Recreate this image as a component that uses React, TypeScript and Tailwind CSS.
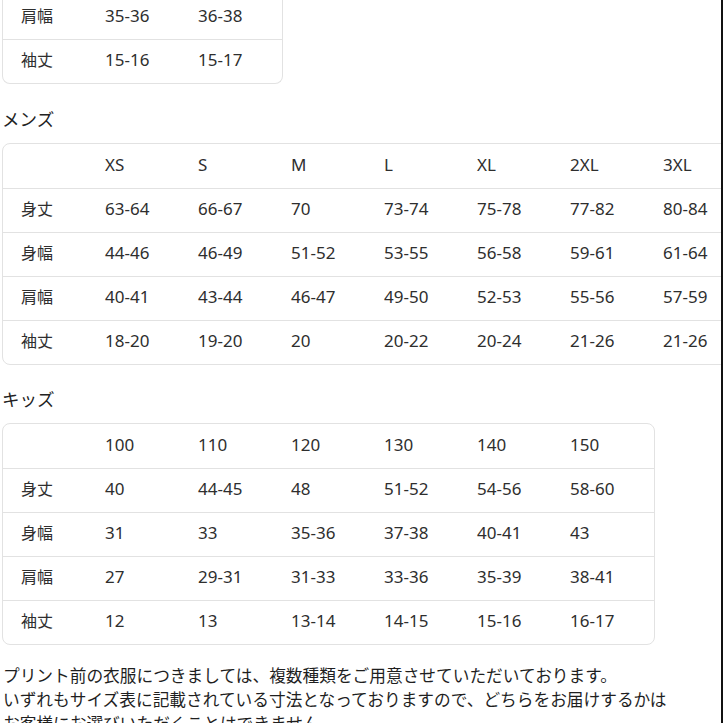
const labelW = 'w-[102px]';

type Row = { label: string; values: string[] };

const ladies: Row[] = [
  { label: '肩幅', values: ['35-36', '36-38'] },
  { label: '袖丈', values: ['15-16', '15-17'] },
];

const mensHead = ['XS', 'S', 'M', 'L', 'XL', '2XL', '3XL'];
const mens: Row[] = [
  { label: '身丈', values: ['63-64', '66-67', '70', '73-74', '75-78', '77-82', '80-84'] },
  { label: '身幅', values: ['44-46', '46-49', '51-52', '53-55', '56-58', '59-61', '61-64'] },
  { label: '肩幅', values: ['40-41', '43-44', '46-47', '49-50', '52-53', '55-56', '57-59'] },
  { label: '袖丈', values: ['18-20', '19-20', '20', '20-22', '20-24', '21-26', '21-26'] },
];

const kidsHead = ['100', '110', '120', '130', '140', '150'];
const kids: Row[] = [
  { label: '身丈', values: ['40', '44-45', '48', '51-52', '54-56', '58-60'] },
  { label: '身幅', values: ['31', '33', '35-36', '37-38', '40-41', '43'] },
  { label: '肩幅', values: ['27', '29-31', '31-33', '33-36', '35-39', '38-41'] },
  { label: '袖丈', values: ['12', '13', '13-14', '14-15', '15-16', '16-17'] },
];

function TableRow({ label, values, first }: { label: string; values: string[]; first?: boolean }) {
  return (
    <div className={`flex h-[44px] items-center pb-[3px] ${first ? '' : 'border-t-[1.5px] border-[#e2e2e2]'}`}>
      <div className={`${labelW} shrink-0 pl-[18px] text-[16px]`}>{label}</div>
      {values.map((v, i) => (
        <div key={i} className={`shrink-0 text-[17px] ${i === values.length - 1 ? 'w-[84px]' : 'w-[93px]'}`}>
          {v}
        </div>
      ))}
    </div>
  );
}

function SizeTable({ head, rows, className }: { head?: string[]; rows: Row[]; className?: string }) {
  return (
    <div className={`ml-[2px] w-max rounded-[8px] border-[1.5px] border-[#e2e2e2] ${className ?? ''}`}>
      {head && <TableRow label="" values={head} first />}
      {rows.map((r, i) => (
        <TableRow key={r.label} label={r.label} values={r.values} first={!head && i === 0} />
      ))}
    </div>
  );
}

export default function App() {
  return (
    <div
      className="relative h-[723px] w-[723px] overflow-hidden bg-white text-[#2e2e2e]"
      style={{ fontFamily: '"Noto Sans", "Noto Sans CJK JP", sans-serif' }}
    >
      <SizeTable rows={ladies} className="-mt-[5px] rounded-t-none border-t-0" />

      <h2 className="mt-[23px] mb-[12px] pl-[2px] text-[17.5px] leading-[24px] text-[#222]">メンズ</h2>
      <SizeTable head={mensHead} rows={mens} />

      <h2 className="mt-[22px] mb-[12px] pl-[2px] text-[17.5px] leading-[24px] text-[#222]">キッズ</h2>
      <SizeTable head={kidsHead} rows={kids} />

      <div className="mt-[19px] pl-[3px] text-[16.7px] leading-[24px] text-[#1f1f1f]">
        <p className="whitespace-nowrap">プリント前の衣服につきましては、複数種類をご用意させていただいております。</p>
        <p className="whitespace-nowrap">いずれもサイズ表に記載されている寸法となっておりますので、どちらをお届けするかは</p>
        <p className="whitespace-nowrap">お客様にお選びいただくことはできません。</p>
      </div>

      <div className="absolute top-0 right-0 h-full w-[2px] bg-[#111]" />
    </div>
  );
}
